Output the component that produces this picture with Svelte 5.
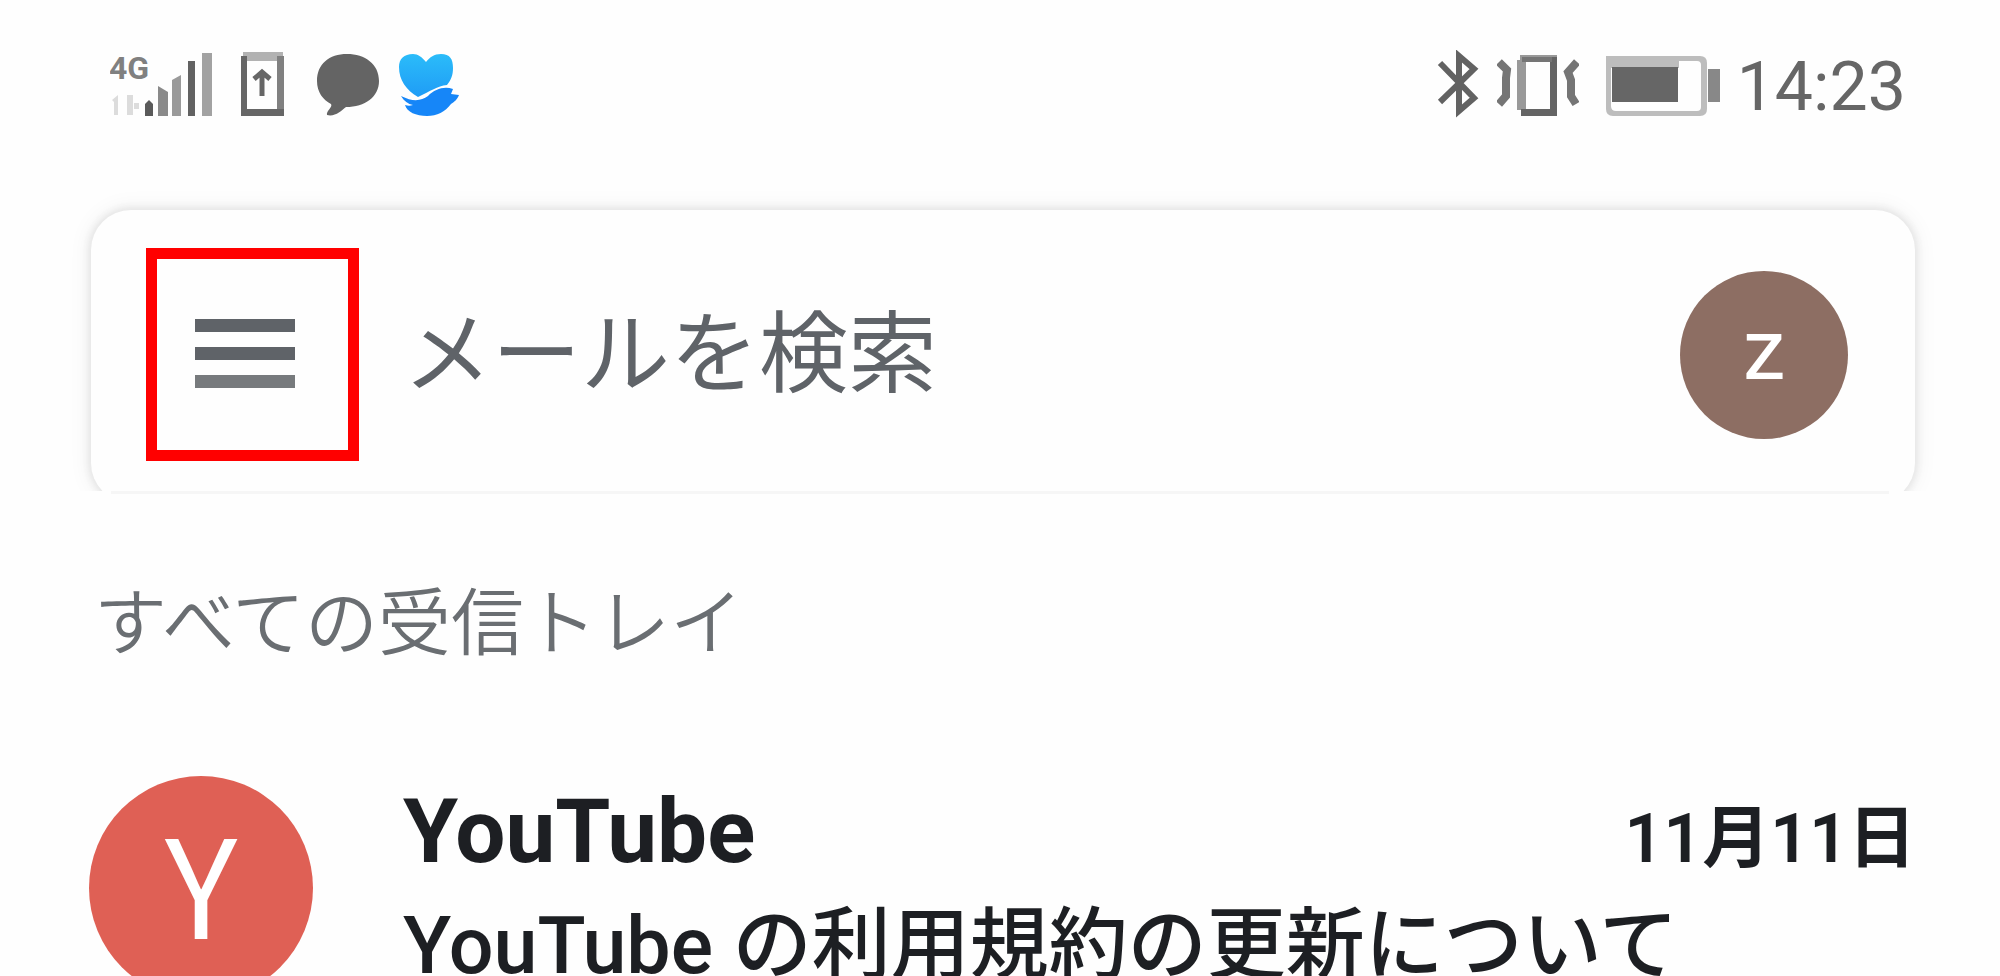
<script lang="ts">
  let query = "";

  const mails = [
    {
      sender: "YouTube",
      initial: "Y",
      date: "11月11日",
      subject: "YouTube の利用規約の更新について",
    },
  ];
</script>

<div class="screen">
  <header class="status-bar">
    <div class="status-group left">
      <svg class="signal" viewBox="0 0 104 68" aria-label="4G">
        <text class="network" x="-1" y="29">4G</text>
        <g fill="#dcdcdc">
          <path d="M2 50l6-5v20H4V52zM17 45h6v20h-6zM24 53h5v6h-5z" />
        </g>
        <path fill="#5a5a5a" d="M35 54l4-4 4 4v12h-8z" />
        <path fill="#8a8a8a" d="M48 36l10 6v24H48z" />
        <path fill="#9a9a9a" d="M62 30l9-5v41h-9z" />
        <path fill="#626262" d="M78 11h7v55h-7z" />
        <path fill="#a2a2a2" d="M92 3h10v63H92z" />
      </svg>
      <svg class="sim" viewBox="0 0 56 68" aria-hidden="true">
        <path fill="#b2b2b2" d="M12 2h40v9H12z" />
        <path fill="#666" d="M10 6h6v53h30v7H10z" />
        <path fill="#808080" d="M46 6h7v60h-7z" />
        <path fill="#666" d="M16 59h37v7H16z" />
        <path fill="none" stroke="#666" stroke-width="5" d="M31 46V23M23 29l8-7 8 7" />
      </svg>
      <svg class="bubble" viewBox="0 0 76 68" aria-hidden="true">
        <path
          fill="#646464"
          d="M43 4C25 4 13 14 13 31c0 11 6 19 14 23 2 3-5 7-4 11 8 2 14-4 19-8 19 0 33-10 33-26C75 14 61 4 43 4z"
        />
      </svg>
      <svg class="heart" viewBox="0 0 64 68" aria-hidden="true">
        <defs>
          <linearGradient id="heart-top" x1="0" y1="0" x2="0" y2="1">
            <stop offset="0" stop-color="#2bbcf9" />
            <stop offset="1" stop-color="#1f9cf6" />
          </linearGradient>
        </defs>
        <path
          fill="url(#heart-top)"
          d="M16 4c5 0 9 3 13 8 4-5 8-8 15-8 9 0 12 5 12 14 0 7-2 12-6 17-10 1-16 6-29 12C9 40 2 30 2 17 2 9 7 4 16 4z"
        />
        <path
          fill="#1686f8"
          d="M4 46c12 6 20 5 27 0 7-7 16-10 25-7l-2 5 8 1c-2 5-5 7-8 9-6 8-14 12-24 12-11 0-20-4-22-11 3 1 5 1 8 0-5-1-9-4-12-9z"
        />
      </svg>
    </div>
    <div class="status-group right">
      <svg class="bluetooth" viewBox="0 0 44 68" aria-hidden="true">
        <path
          fill="none"
          stroke="#626262"
          stroke-width="6"
          d="M3 13l34 35-15 13V6l15 13L3 52"
        />
      </svg>
      <svg class="vibrate" viewBox="0 0 82 68" aria-hidden="true">
        <path fill="#999" d="M23 5h37v7H23zM20 10h9v50h-9z" />
        <path fill="#646464" d="M53 7h7v59h-7zM24 59h36v7H24z" />
        <path fill="#757575" d="M25 7h30v5H25z" />
        <path fill="none" stroke="#757575" stroke-width="8" d="M2 12l8 8-1 8v18l-7 8M80 12l-9 10 3 8v16l5 8" />
      </svg>
      <svg class="battery" viewBox="0 0 126 68" aria-hidden="true">
        <path fill="#bdbdbd" d="M11 6h94q7 0 7 7v46q0 7-7 7H18q-7 0-7-7zM16 11v45q0 5 5 5h81q4 0 4-4V15q0-4-4-4z" fill-rule="evenodd" />
        <path fill="#bdbdbd" d="M15 8h69v10H15z" />
        <path fill="#666" d="M17 17h66v35H17z" />
        <path fill="#888" d="M113 19h12v33h-12z" />
      </svg>
      <time class="clock">14:23</time>
    </div>
  </header>

  <div class="search-area">
    <form class="search-card" on:submit|preventDefault>
      <button class="menu-button" type="button" aria-label="メニュー">
        <span class="menu-line"></span>
        <span class="menu-line"></span>
        <span class="menu-line light"></span>
      </button>
      <input
        class="search-input"
        type="text"
        aria-label="メールを検索"
        placeholder="メールを検索"
        bind:value={query}
      />
      <button class="account" type="button">z</button>
    </form>
  </div>
  <hr class="divider" />

  <main>
    <h1 class="mailbox">すべての受信トレイ</h1>
    {#each mails as mail}
      <article class="mail">
        <div class="avatar">{mail.initial}</div>
        <div class="mail-body">
          <div class="mail-head">
            <h2 class="sender">{mail.sender}</h2>
            <time class="date">{mail.date}</time>
          </div>
          <p class="subject">{mail.subject}</p>
        </div>
      </article>
    {/each}
  </main>
</div>

<style>
:global(body) {
  margin: 0;
  background: #fefefe;
}
.screen {
  height: 100vh;
  overflow: hidden;
  font-family: Roboto, "Noto Sans CJK JP", sans-serif;
  color: #1d1f23;
}
.status-bar {
  display: flex;
  justify-content: space-between;
  padding: 50px 94px 0 110px;
}
.status-group {
  display: flex;
  align-items: flex-start;
}
.status-group.left {
  gap: 17px;
}
.status-group.right {
  gap: 16px;
}
.status-group svg {
  display: block;
  height: 68px;
}
.network {
  font-size: 32px;
  font-weight: 700;
  fill: #808080;
}
.clock {
  font-size: 68px;
  line-height: 74px;
  color: #666;
}
.search-area {
  overflow: hidden;
  padding: 86px 85px 0 91px;
}
.search-card {
  display: flex;
  align-items: center;
  margin-bottom: -12px;
  padding: 38px 67px 42px 55px;
  border-radius: 40px;
  background: #fefefe;
  box-shadow: 0 0 6px 3px #e6e6e6, 0 0 20px 6px #f6f6f6;
}
.menu-button {
  display: flex;
  flex: none;
  flex-direction: column;
  align-items: center;
  justify-content: center;
  gap: 15px;
  box-sizing: border-box;
  width: 213px;
  height: 213px;
  padding: 0 16px 2px 0;
  border: 11px solid #f00;
  background: none;
  cursor: pointer;
}
.menu-line {
  width: 100px;
  height: 13px;
  background: #5f6368;
}
.menu-line.light {
  background: #777a7d;
}
.search-input {
  flex: 1;
  min-width: 0;
  height: 132px;
  margin-left: 44px;
  padding: 0;
  border: none;
  outline: none;
  background: none;
  font-family: inherit;
  font-size: 89px;
  color: #5f6368;
}
.search-input::placeholder {
  color: #5f6368;
  opacity: 1;
}
.account {
  flex: none;
  width: 168px;
  height: 168px;
  padding: 0 0 10px;
  border: none;
  border-radius: 50%;
  background: #8d6e63;
  color: #fff;
  font-family: inherit;
  font-size: 86px;
  font-weight: 400;
  cursor: pointer;
}
.divider {
  height: 3px;
  margin: 0 111px;
  border: none;
  background: #f6f6f6;
}
.mailbox {
  margin: 0;
  padding: 78px 94px 0;
  font-size: 73px;
  font-weight: 350;
  line-height: 104px;
  color: #6a6e72;
}
.mail {
  display: flex;
  gap: 90px;
  padding: 100px 84px 0 89px;
}
.avatar {
  flex: none;
  width: 224px;
  height: 224px;
  border-radius: 50%;
  background: #df6055;
  color: #fff;
  font-family: "Noto Sans CJK JP", sans-serif;
  font-size: 136px;
  line-height: 208px;
  text-align: center;
}
.mail-body {
  flex: 1;
  min-width: 0;
}
.mail-head {
  display: flex;
  align-items: baseline;
  justify-content: space-between;
}
.sender {
  margin: 0;
  font-size: 89px;
  font-weight: 700;
  line-height: 112px;
}
.date {
  font-size: 68px;
  font-weight: 600;
  line-height: 80px;
}
.subject {
  margin: 0;
  font-size: 79px;
  font-weight: 500;
  line-height: 116px;
  white-space: nowrap;
}
</style>
